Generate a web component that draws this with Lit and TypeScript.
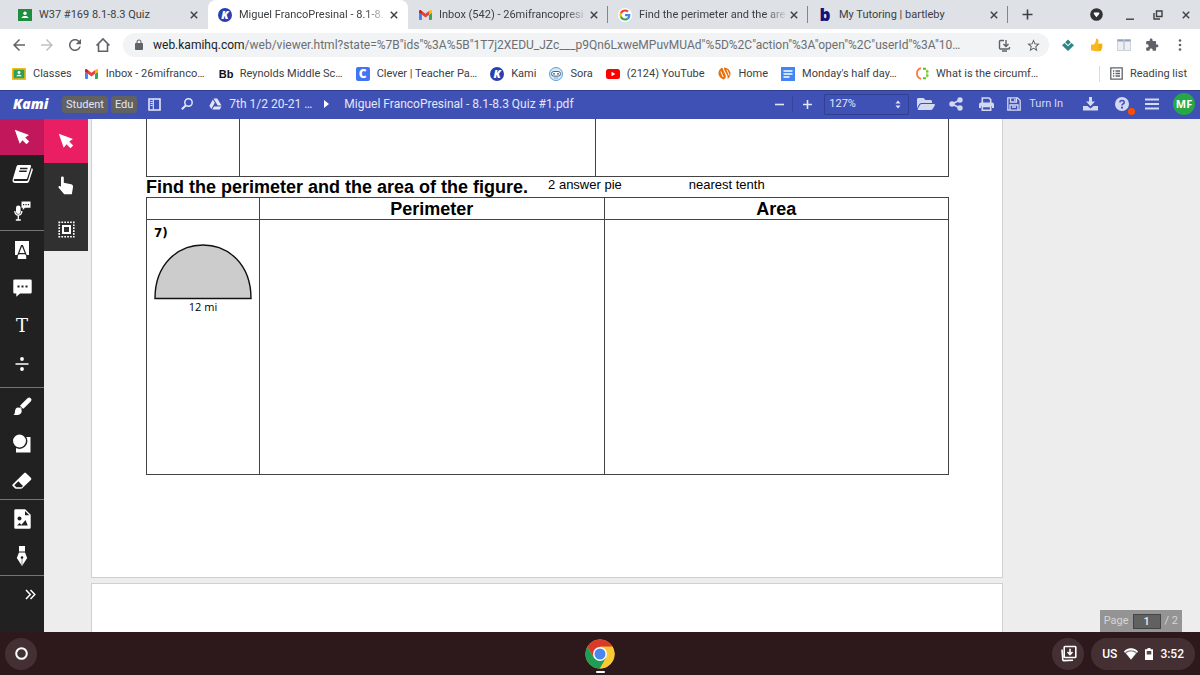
import { LitElement, html, svg, css, TemplateResult } from "lit";
import { customElement, property, state } from "lit/decorators.js";
import { classMap } from "lit/directives/class-map.js";

const draw = (w: number, h: number, box: string, body: TemplateResult) =>
  html`<svg width=${w} height=${h} viewBox=${box} aria-hidden="true">${body}</svg>`;

const path = (size: number, d: string) => draw(size, size, "0 0 24 24", svg`<path fill="currentColor" d=${d}></path>`);

const icons: Record<string, TemplateResult> = {
  back: path(18, "M20 11H7.83l5.59-5.59L12 4l-8 8 8 8 1.41-1.41L7.83 13H20v-2z"),
  forward: path(18, "M12 4l-1.41 1.41L16.17 11H4v2h12.17l-5.58 5.59L12 20l8-8z"),
  reload: path(18, "M17.65 6.35C16.2 4.9 14.21 4 12 4c-4.42 0-7.99 3.58-7.99 8s3.57 8 7.99 8c3.73 0 6.84-2.55 7.73-6h-2.08c-.82 2.33-3.04 4-5.65 4-3.31 0-6-2.69-6-6s2.69-6 6-6c1.66 0 3.14.69 4.22 1.78L13 11h7V4l-2.35 2.35z"),
  home: draw(16, 16, "0 0 16 16", svg`<path d="M1.5 8.5 8 2l6.500 6.500M3.500 7v7.200h9V7" fill="none" stroke="currentColor" stroke-width="1.600"></path>`),
  lock: path(12, "M18 8h-1V6c0-2.760-2.240-5-5-5S7 3.240 7 6v2H6c-1.100 0-2 .9-2 2v10c0 1.100.9 2 2 2h12c1.100 0 2-.9 2-2V10c0-1.100-.9-2-2-2zm-9-2c0-1.660 1.340-3 3-3s3 1.340 3 3v2H9V6z"),
  star: path(15, "M22 9.24l-7.19-.62L12 2 9.19 8.63 2 9.24l5.46 4.73L5.82 21 12 17.27 18.18 21l-1.63-7.03L22 9.24zM12 15.4l-3.76 2.27 1-4.28-3.32-2.88 4.38-.38L12 6.1l1.71 4.04 4.38.38-3.32 2.88 1 4.28L12 15.4z"),
  install: draw(13, 13, "0 0 13 13", svg`<path d="M6 1.500H2.500a1 1 0 0 0-1 1v6.500a1 1 0 0 0 1 1h8a1 1 0 0 0 1-1V8M4 12h5M8 1v6M5.500 5 8 7.500 10.500 5" fill="none" stroke="currentColor" stroke-width="1.400"></path>`),
  puzzle: path(14, "M20.5 11H19V7c0-1.1-.9-2-2-2h-4V3.5C13 2.12 11.88 1 10.5 1S8 2.12 8 3.5V5H4c-1.1 0-1.99.9-1.99 2v3.8H3.5c1.49 0 2.7 1.21 2.7 2.7s-1.21 2.700-2.700 2.700H2V20c0 1.1.9 2 2 2h3.800v-1.500c0-1.490 1.210-2.700 2.700-2.700 1.490 0 2.700 1.210 2.700 2.700V22H17c1.1 0 2-.9 2-2v-4h1.500c1.380 0 2.500-1.120 2.500-2.500S21.880 11 20.500 11z"),
  more: draw(14, 14, "0 0 14 14", svg`<g fill="currentColor"><circle cx="7" cy="2.500" r="1.300"></circle><circle cx="7" cy="7" r="1.300"></circle><circle cx="7" cy="11.500" r="1.300"></circle></g>`),
  diamond: draw(12, 12, "0 0 12 12", svg`<path fill="#2f8583" d="M6 .5 8.800 3.300 6 6 3.200 3.300zM2.500 3.900 6 7.300l3.500-3.400L12 6.300 6 12 0 6.300z"></path>`),
  thumb: draw(13, 14, "0 0 13 14", svg`<path fill="#f9b81f" d="M1 6.500h3C5.500 5 6 3 6 .8c1.800-.6 2.900.7 2.500 2.600L8 5.500h3.200c1.500 0 1.700 1.600.9 2 .8.700.6 1.800-.2 2.100.5.800.2 1.600-.6 1.900.2 1-.4 1.700-1.400 1.700H6C4 13.200 3 12.500 1 12.500z"></path><path d="M8.500 7.500h3M8.500 9.600h3M8.300 11.500h2.600" stroke="#e08a10" stroke-width=".6"></path>`),
  columns: draw(14, 12, "0 0 14 12", svg`<g fill="#eceff3" stroke="#b9c0c8" stroke-width=".7"><path d="M.5.5h6v11h-6zM7.500.5h6v11h-6z"></path></g><path fill="#8fa3bd" d="M.5.5h6v2h-6zM7.500.5h6v2h-6z"></path>`),
  close: draw(8, 8, "0 0 8 8", svg`<path d="m.8.8 6.400 6.400M7.200.8.8 7.200" stroke="currentColor" stroke-width="1.400"></path>`),
  plus: draw(11, 11, "0 0 11 11", svg`<path d="M5.500.5v10M.5 5.500h10" stroke="currentColor" stroke-width="1.600"></path>`),
  minus: draw(9, 9, "0 0 9 9", svg`<path d="M0 4.500h9" stroke="currentColor" stroke-width="1.600"></path>`),
  zoomIn: draw(9, 9, "0 0 9 9", svg`<path d="M0 4.500h9M4.500 0v9" stroke="currentColor" stroke-width="1.600"></path>`),
  account: draw(13, 13, "0 0 13 13", svg`<circle cx="6.500" cy="6.500" r="6.300" fill="#303236"></circle><path d="M3.800 4.500h5.400v1.500L6.500 9.200 3.800 6z" fill="#fff"></path>`),
  minimize: draw(10, 12, "0 0 10 12", svg`<path d="M1 10.200h8" stroke="currentColor" stroke-width="1.400"></path>`),
  restore: draw(10, 10, "0 0 10 10", svg`<path d="M3.500 1h5.500v5.500H3.500zM1 3v6h6" fill="none" stroke="currentColor" stroke-width="1.400"></path>`),
  classroomGreen: draw(14, 12, "0 0 14 12", svg`<path fill="#1e8e3e" d="M0 0h14v12H0z"></path><circle cx="7" cy="4.300" r="1.700" fill="#fff"></circle><path d="M3.500 9c.5-2.600 6.500-2.600 7 0z" fill="#fff"></path>`),
  classroom: draw(14, 12, "0 0 14 12", svg`<path fill="#f6b91a" d="M0 0h14v12H0z"></path><path fill="#2e9e58" d="M1.700 1.700h10.600v8.600H1.700z"></path><circle cx="7" cy="4.500" r="1.400" fill="#fff"></circle><path d="M4.200 8.300c.4-2.200 5.200-2.200 5.600 0z" fill="#fff"></path>`),
  gmail: draw(13, 10, "52 42 88 66", svg`<path fill="#4285f4" d="M58 108h14V74L52 59v43c0 3.320 2.690 6 6 6"></path><path fill="#34a853" d="M120 108h14c3.320 0 6-2.690 6-6V59l-20 15"></path><path fill="#fbbc04" d="M120 48v26l20-15v-8c0-7.420-8.470-11.650-14.400-7.200"></path><path fill="#ea4335" d="M72 74V48l24 18 24-18v26L96 92"></path><path fill="#c5221f" d="M52 51v8l20 15V48l-5.600-4.200c-5.940-4.450-14.400-.22-14.400 7.200"></path>`),
  google: draw(14, 14, "-6 -6 60 60", svg`<circle cx="24" cy="24" r="30" fill="#fff"></circle><path fill="#EA4335" d="M24 9.500c3.540 0 6.710 1.220 9.210 3.600l6.850-6.850C35.900 2.380 30.470 0 24 0 14.620 0 6.510 5.380 2.560 13.220l7.980 6.190C12.430 13.720 17.740 9.500 24 9.500z"></path><path fill="#4285F4" d="M46.980 24.550c0-1.570-.15-3.090-.38-4.550H24v9.020h12.940c-.58 2.960-2.260 5.480-4.780 7.180l7.730 6c4.510-4.180 7.090-10.360 7.090-17.650z"></path><path fill="#FBBC05" d="M10.530 28.590c-.48-1.450-.76-2.990-.76-4.590s.27-3.140.76-4.590l-7.980-6.190C.92 16.460 0 20.120 0 24c0 3.880.92 7.540 2.560 10.780l7.970-6.190z"></path><path fill="#34A853" d="M24 48c6.480 0 11.930-2.130 15.890-5.810l-7.730-6c-2.150 1.450-4.920 2.300-8.160 2.300-6.260 0-11.570-4.220-13.470-9.910l-7.980 6.190C6.510 42.620 14.620 48 24 48z"></path>`),
  sora: draw(14, 14, "0 0 14 14", svg`<circle cx="7" cy="7" r="6.500" fill="#d5eafa" stroke="#5f9dcc"></circle><rect x="2.500" y="4.500" width="9" height="4.600" rx="2.300" fill="#fff" stroke="#35557e" stroke-width=".9"></rect><circle cx="5" cy="6.800" r=".9" fill="#35557e"></circle><circle cx="9" cy="6.800" r=".9" fill="#35557e"></circle><path d="M5 11h4" stroke="#5f9dcc" stroke-width=".8"></path>`),
  youtube: draw(14, 10, "0 0 14 10", svg`<rect width="14" height="10" rx="2.500" fill="#f00"></rect><path d="M5.500 2.800v4.400L9.300 5z" fill="#fff"></path>`),
  flame: draw(13, 13, "0 0 13 13", svg`<g fill="#e8710a"><path d="M4.200.6 7.600 8.200c.8 1.900-.3 3.600-2 4.300C3 11.500.5 9.500.5 6.300.5 3.500 2 1.500 4.200.6z"></path><path d="M6.300.5c3.700.4 6.200 2.900 6.200 6.200 0 2.500-1.300 4.500-3.400 5.600.8-1.200.8-2.400.2-3.800L6.500 3.300C6 2.200 5.900 1.300 6.300.5z"></path></g><path d="M2.800 4.500 5.200 10M9 2.800l2.200 5.700" stroke="#fff" stroke-width="1"></path>`),
  docs: draw(14, 14, "0 0 14 14", svg`<path fill="#4285f4" d="M0 0h14v14H0z"></path><path d="M2.500 4h9M2.500 7h9M2.500 10h6" stroke="#fff" stroke-width="1.400"></path>`),
  brainly: draw(13, 13, "0 0 13 13", svg`<path d="M5 1.200A5.500 5.500 0 0 0 5 11.800" fill="none" stroke="#ff7847" stroke-width="1.800"></path><path d="M7 1.800h3M10 4.500h2.500M10 8.500h2.500M7 11.300h3" stroke="#5fbf1f" stroke-width="2"></path><path d="M11 2.500v8" stroke="#93d942" stroke-width="1.400" stroke-dasharray="2 1"></path>`),
  reading: draw(13, 13, "0 0 13 13", svg`<path d="M.8.8h11.400v11.400H.8zM3 4h1.300M5.500 4H10M3 6.500h1.300M5.500 6.500H10M3 9h1.300M5.500 9H10" fill="none" stroke="#5f6368" stroke-width="1.300"></path>`),
  panel: draw(13, 13, "0 0 13 13", svg`<path d="M1 1h11v11H1z" fill="none" stroke="currentColor" stroke-width="1.600"></path><path d="M5.300 1v11M2.500 3.500h2M2.500 5.500h2M2.500 7.500h2" stroke="currentColor" stroke-width="1.100"></path>`),
  search: draw(12, 12, "0 0 12 12", svg`<circle cx="7.500" cy="4.500" r="3.700" fill="none" stroke="currentColor" stroke-width="1.500"></circle><path d="M5 7.200.8 11.300" stroke="currentColor" stroke-width="2"></path>`),
  drive: draw(13, 12, "0 0 13 12", svg`<path fill="currentColor" d="M4.500.5h3.800l4.200 7H8.700zM3.900 1.500 5.800 4.800 2.300 11 .4 7.700zM5 8.400h7.600l-1.900 3.100H3.200z"></path>`),
  folder: draw(18, 16, "0 0 576 512", svg`<path fill="currentColor" d="M572.694 292.093L500.27 416.248A63.997 63.997 0 0 1 444.989 448H45.025c-18.523 0-30.064-20.093-20.731-36.093l72.424-124.155A64 64 0 0 1 152 256h399.964c18.523 0 30.064 20.093 20.73 36.093zM152 224h328v-48c0-26.510-21.490-48-48-48H272l-64-64H48C21.490 64 0 85.490 0 112v278.046l69.077-118.418C86.214 242.250 117.989 224 152 224z"></path>`),
  share: draw(14, 14, "0 0 14 14", svg`<g fill="currentColor"><circle cx="3" cy="7" r="2.700"></circle><circle cx="11" cy="3" r="2.700"></circle><circle cx="11" cy="11" r="2.700"></circle></g><path d="M11 3 3 7l8 4" fill="none" stroke="currentColor" stroke-width="1.700"></path>`),
  print: draw(15, 14, "0 0 15 14", svg`<path d="M3.300 6V1h6.700l1.700 1.700V6" fill="none" stroke="currentColor" stroke-width="1.600"></path><path fill="currentColor" d="M2 5.500h11a2 2 0 0 1 2 2V11h-2V9H2v2H0V7.500a2 2 0 0 1 2-2z"></path><path d="M3.300 9.500h8.400v3.700H3.300z" fill="none" stroke="currentColor" stroke-width="1.600"></path>`),
  save: draw(14, 14, "0 0 14 14", svg`<path d="M.8.8h9.700l2.700 2.700v9.700H.8zM3.500 1v4h6V1M3 13V8h8v5M7.800 2v2M5 10h4" fill="none" stroke="currentColor" stroke-width="1.300"></path>`),
  download: draw(15, 14, "0 0 15 14", svg`<path fill="currentColor" d="M6 0h3v4.500h3L7.500 9.300 3 4.500h3zM0 9h4.500l3 2.500 3-2.500H15v4.500H0z"></path>`),
  help: draw(14, 14, "0 0 14 14", svg`<circle cx="7" cy="7" r="7" fill="currentColor"></circle><path d="M4.800 5.400c.2-2.700 4.500-2.500 4.400 0C9.200 7 7 6.800 7 8.600" fill="none" stroke="#3f51b5" stroke-width="1.600"></path><circle cx="7" cy="10.700" r="1.100" fill="#3f51b5"></circle>`),
  menu: draw(14, 12, "0 0 14 12", svg`<path d="M0 1.500h14M0 6h14M0 10.500h14" stroke="currentColor" stroke-width="1.800"></path>`),
  pointer: draw(16, 16, "0 0 16 16", svg`<path fill="currentColor" d="M.8.8 15 6l-3.800 2.600 4 3.900-2.700 2.700-4-4-2.800 3.500z"></path>`),
  book: draw(21, 20, "0 0 21 20", svg`<path fill="currentColor" d="M6.500 1h11.300c1 0 1.500.7 1.200 1.600l-3.700 11.300c-.3.800-.9 1.200-1.700 1.200H3c-1 0-1.500.6-1.200 1.300.2.500.7.700 1.300.7h11.200c.8 0 1.400-.5 1.700-1.200l3.800-11.800c.9.500 1.200 1.200.9 2.100l-3.600 11c-.4 1.200-1.300 1.800-2.500 1.800H3.300C1.500 19 .2 17.700.5 15.900L4.500 2.600C4.800 1.600 5.500 1 6.500 1z"></path><path d="M8 4.500h7.500M7.200 7.300h7.500" stroke="#212121" stroke-width="1.400"></path>`),
  speech: draw(17, 20, "0 0 17 20", svg`<path fill="currentColor" d="M7.500.5h9v6.300H11L8.800 9V6.800H7.500z"></path><rect x="2" y="4.500" width="4.600" height="8.500" rx="2.300" fill="currentColor"></rect><path d="M.8 10c.3 5.500 6.800 5.500 7.100 0M4.300 14v4.800M1.800 19h5" fill="none" stroke="currentColor" stroke-width="1.300"></path><path d="M9 3.700h1.200M11.400 3.700h1.200M13.800 3.700H15" stroke="#212121" stroke-width="1.200"></path>`),
  markup: draw(16, 18, "0 0 16 18", svg`<path fill="currentColor" d="M1 0h14v14h-2.300L8.900 4H7.100L3.300 14H1z"></path><path fill="currentColor" d="M8 5.200 10.700 12H5.300zM5 13.300h6l1.200 1.500V18H3.800v-3.200z"></path>`),
  comment: draw(19, 18, "0 0 19 18", svg`<path fill="currentColor" d="M1.500.5h16a1.200 1.200 0 0 1 1.200 1.200v11.600a1.200 1.200 0 0 1-1.200 1.200H7L3.300 17.700v-3.200H1.500a1.200 1.200 0 0 1-1.200-1.200V1.700A1.200 1.200 0 0 1 1.500.5z"></path><path d="M4.500 7.500h2M8.500 7.500h2M12.500 7.500h2" stroke="#212121" stroke-width="1.800"></path>`),
  divide: draw(14, 14, "0 0 14 14", svg`<path d="M.5 7h13" stroke="currentColor" stroke-width="1.500"></path><circle cx="7" cy="2" r="1.900" fill="currentColor"></circle><circle cx="7" cy="12" r="1.900" fill="currentColor"></circle>`),
  brush: draw(19, 19, "0 0 19 19", svg`<path d="m9.300 9.700 6.800-6.900" stroke="currentColor" stroke-width="4.500" stroke-linecap="round"></path><path fill="currentColor" d="M5 10.500c2.500 0 4 1.700 3.700 3.900-.4 3.200-4.500 4.300-8.200 3.400 1.500-.9 1.300-2 1.500-3.700.2-2 1.300-3.600 3-3.600z"></path><path d="M6.500 8.800l4 4" stroke="#212121" stroke-width="1"></path>`),
  shapes: draw(20, 19, "0 0 20 19", svg`<path d="M4 3h14.500v15.500H4z" fill="currentColor"></path><circle cx="7.500" cy="7" r="7.200" fill="currentColor" stroke="#212121" stroke-width="1.500"></circle>`),
  eraser: draw(20, 18, "0 0 20 18", svg`<path fill="currentColor" d="M12 1.300c.7-.6 1.500-.6 2.200 0l4.600 4.500c.7.700.7 1.500 0 2.200l-8.600 8.300c-.3.300-.7.500-1.200.5H3.500L.8 14.200c-.6-.6-.6-1.400 0-2z"></path><path fill="#212121" d="M6.300 9.200 11 14l-1.300 1.300H4.300l-2-2z"></path>`),
  picture: draw(17, 20, "0 0 17 20", svg`<path fill="currentColor" d="M1.500.3h9.700l5.500 5.500v12.700a1.200 1.200 0 0 1-1.200 1.200h-14A1.200 1.200 0 0 1 .3 18.500v-17A1.200 1.200 0 0 1 1.500.3z"></path><circle cx="5.500" cy="9.500" r="2" fill="#212121"></circle><path fill="#212121" d="M3 16.500 5.500 14l2 1.800 4-4.800 2.300 5.500zM11 2v4.300h4.300z"></path>`),
  pen: draw(12, 20, "0 0 12 20", svg`<path fill="currentColor" d="M3 0h6v5.500H3zM3 6.500h6l2.200 5.500L6 20 .8 12z"></path><circle cx="6" cy="11.500" r="1.300" fill="#212121"></circle><path d="M6 11.500V19" stroke="#212121" stroke-width=".5"></path>`),
  expand: draw(11, 11, "0 0 11 11", svg`<path d="m1 1 4.300 4.500L1 10M5.500 1l4.300 4.500L5.500 10" fill="none" stroke="currentColor" stroke-width="1.500"></path>`),
  hand: draw(16, 19, "0 0 16 19", svg`<path fill="currentColor" d="M3 1.800C3 .2 5.800.2 5.800 1.800v5L13 8.300c1.500.3 2.300 1.300 2 2.900l-1.200 7H6.200L.7 11.700c-.8-1 .6-2.400 1.700-1.500l.6.500z"></path>`),
  marquee: draw(17, 17, "0 0 17 17", svg`<path d="M.5 1.200h16M.5 15.800h16M1.200.5v16M15.800.5v16" stroke="currentColor" stroke-width="1.600" stroke-dasharray="1.700 1.200"></path><path d="M5 5h7v7H5z" fill="none" stroke="currentColor" stroke-width="2"></path>`),
  launcher: draw(13, 13, "0 0 13 13", svg`<circle cx="6.500" cy="6.500" r="5.300" fill="none" stroke="#fff" stroke-width="2"></circle>`),
  chrome: draw(30, 30, "0 0 30 30", svg`<circle cx="15" cy="15" r="14.500" fill="#fbc934"></circle><path fill="#d93a2b" d="M2.440 7.750A14.500 14.500 0 0 1 27.560 7.750H15L8.700 18.600z"></path><path fill="#1f9d55" d="M2.440 7.750A14.500 14.500 0 0 0 15 29.500L21.300 18.600 8.700 18.600z"></path><path fill="#fbc934" d="M27.560 7.750A14.500 14.500 0 0 1 15 29.500L21.300 18.600 21 10 15 7.750z"></path><circle cx="15" cy="15" r="7" fill="#fff"></circle><circle cx="15" cy="15" r="5.500" fill="#4a86ee"></circle>`),
  tote: draw(17, 17, "0 0 17 17", svg`<path d="M5 1.500h10a.8.8 0 0 1 .8.800v9.400a.8.8 0 0 1-.8.800H5a.8.8 0 0 1-.8-.8V2.300A.8.8 0 0 1 5 1.500zM2 4.500l.8 10.300c0 .5.400.8.900.8l9.300-.3" fill="none" stroke="#fff" stroke-width="1.600"></path><path d="M10 3.800v5.500M7.500 7 10 9.500 12.500 7" fill="none" stroke="#fff" stroke-width="1.600"></path>`),
  wifi: draw(14, 12, "0 0 14 12", svg`<path fill="#fff" fill-opacity=".35" d="M0 3.500C4-.8 10-.8 14 3.500L7 12z"></path><path fill="#fff" d="M0 3.500C4-.8 10-.8 14 3.500l-1 1.200C9.500 1.500 4.500 1.500 1 4.700zM2 5.300c3-2.500 7-2.500 10 0L7 11.500z"></path>`),
  battery: draw(8, 12, "0 0 8 12", svg`<path fill="#fff" d="M2.500 0h3v1.300H8V12H0V1.300h2.500z"></path><path fill="#57464a" d="M1.700 3h4.600v3.500H1.700z"></path>`),
};

interface Mark { icon?: string; glyph?: string; kind?: string; label: string; long?: boolean; active?: boolean }

const mark = (m: Mark) =>
  m.glyph ? html`<span class="glyph ${m.kind}">${m.glyph}</span>` : html`<span class="glyph">${icons[m.icon!]}</span>`;

const glyphs = css`
  .glyph { flex: none; display: grid; place-items: center; width: 14px; height: 14px; line-height: 14px; }
  .kami { border-radius: 50%; background: #2c3fb0; color: #fff; font: italic 800 11px/14px "Open Sans", sans-serif; }
  .bb { font: 700 11px/14px "Liberation Sans", sans-serif; color: #111; }
  .clever { border-radius: 2px; background: #4274f6; color: #fff; font: 800 12px/14px "Open Sans", sans-serif; }
  .bartleby { color: #12127a; font: 800 17px/14px "Open Sans", sans-serif; }
`;

const base = css`
  :host { display: block; font-family: Roboto, sans-serif; }
  * { box-sizing: border-box; }
  svg { display: block; flex: none; }
  button { border: 0; padding: 0; background: none; color: inherit; font: inherit; display: grid; place-items: center; cursor: pointer; }
  a { color: inherit; text-decoration: none; }
`;

@customElement("browser-chrome")
export class BrowserChrome extends LitElement {
  static styles = [base, glyphs, css`
    :host { color: #3c4043; background: #fff; font-size: 11px; line-height: 16px; }
    .tabs { display: flex; height: 29px; background: #dee1e6; padding-left: 8px; }
    .tab { flex: 0 1 200px; min-width: 0; display: flex; align-items: center; padding: 0 10px; position: relative; }
    .tab.active { background: #fff; border-radius: 8px 8px 0 0; }
    .tab.split::after { content: ""; position: absolute; right: 0; top: 6px; width: 1px; height: 17px; background: #80868b; }
    .title { flex: 1; min-width: 0; margin: 0 2px 0 7px; overflow: hidden; white-space: nowrap; -webkit-mask-image: linear-gradient(90deg, #000 85%, transparent); }
    .title.short { -webkit-mask-image: none; }
    .tab button { width: 8px; height: 16px; }
    .new { width: 38px; }
    .window { margin-left: auto; display: flex; align-items: center; padding-right: 4px; }
    .window button { width: 20px; height: 28px; margin-right: 8px; }
    .window .account { margin-right: 14px; }
    .window button:last-child { margin-right: 0; }
    .bar { display: flex; align-items: center; gap: 8px; height: 32px; padding: 0 10px 0 9px; color: #5f6368; }
    .bar button { width: 20px; height: 24px; }
    .bar .dim { color: #bdc1c6; }
    .address { flex: 1; min-width: 0; display: flex; align-items: center; height: 24px; margin: 0 1px 0 2px; padding: 0 6px 0 10px; border-radius: 12px; background: #f1f3f4; font-size: 12px; }
    .address label { margin-left: 8px; color: #202124; }
    .address input { flex: 1; min-width: 0; border: 0; padding: 0; background: none; font: inherit; color: #6b6f73; outline: 0; }
    .address button { margin-left: 9px; }
    .marks { display: flex; align-items: center; gap: 13px; height: 29px; padding: 0 13px 4px 12px; white-space: nowrap; }
    .marks a { display: flex; align-items: center; gap: 7px; }
    .long { min-width: 100px; }
    .reading { margin-left: auto; display: flex; gap: 7px; padding-left: 10px; border-left: 1px solid #dadce0; }
  `];

  private tabs: Mark[] = [
    { icon: "classroomGreen", label: "W37 #169 8.1-8.3 Quiz" },
    { glyph: "K", kind: "kami", label: "Miguel FrancoPresinal - 8.1-8.", long: true, active: true },
    { icon: "gmail", label: "Inbox (542) - 26mifrancopresi", long: true },
    { icon: "google", label: "Find the perimeter and the are", long: true },
    { glyph: "b", kind: "bartleby", label: "My Tutoring | bartleby" },
  ];

  private marks: Mark[] = [
    { icon: "classroom", label: "Classes" },
    { icon: "gmail", label: "Inbox - 26mifranco…", long: true },
    { glyph: "Bb", kind: "bb", label: "Reynolds Middle Sc…", long: true },
    { glyph: "C", kind: "clever", label: "Clever | Teacher Pa…", long: true },
    { glyph: "K", kind: "kami", label: "Kami" },
    { icon: "sora", label: "Sora" },
    { icon: "youtube", label: "(2124) YouTube" },
    { icon: "flame", label: "Home" },
    { icon: "docs", label: "Monday's half day…", long: true },
    { icon: "brainly", label: "What is the circumf…", long: true },
  ];

  render() {
    return html`
      <div class="tabs">
        ${this.tabs.map((t, i) => html`
          <div class=${classMap({ tab: true, active: !!t.active, split: i > 1 })}>
            ${mark(t)}<span class=${classMap({ title: true, short: !t.long })}>${t.label}</span>
            <button aria-label="Close tab">${icons.close}</button>
          </div>`)}
        <button class="new" aria-label="New tab">${icons.plus}</button>
        <div class="window">
          <button class="account" aria-label="Account">${icons.account}</button>
          <button aria-label="Minimize">${icons.minimize}</button>
          <button aria-label="Restore">${icons.restore}</button>
          <button aria-label="Close">${icons.close}</button>
        </div>
      </div>
      <div class="bar">
        <button aria-label="Back">${icons.back}</button>
        <button class="dim" aria-label="Forward">${icons.forward}</button>
        <button aria-label="Reload">${icons.reload}</button>
        <button aria-label="Home">${icons.home}</button>
        <div class="address">
          ${icons.lock}
          <label for="url">web.kamihq.com</label>
          <input id="url" .value=${'/web/viewer.html?state=%7B"ids"%3A%5B"1T7j2XEDU_JZc___p9Qn6LxweMPuvMUAd"%5D%2C"action"%3A"open"%2C"userId"%3A"10…'}>
          <button aria-label="Install">${icons.install}</button>
          <button aria-label="Bookmark">${icons.star}</button>
        </div>
        <button aria-label="Extension">${icons.diamond}</button>
        <button aria-label="Like">${icons.thumb}</button>
        <button aria-label="Side by side">${icons.columns}</button>
        <button aria-label="Extensions">${icons.puzzle}</button>
        <button aria-label="More">${icons.more}</button>
      </div>
      <nav class="marks">
        ${this.marks.map((m) => html`<a href="#">${mark(m)}<span class=${classMap({ long: !!m.long })}>${m.label}</span></a>`)}
        <button class="reading">${icons.reading}<span>Reading list</span></button>
      </nav>`;
  }
}

@customElement("kami-header")
export class KamiHeader extends LitElement {
  static styles = [base, css`
    :host { background: #3f51b5; border-top: 1px solid #303f8f; color: #e3e6f8; font-size: 12px; line-height: 16px; }
    header { display: flex; align-items: center; height: 28px; padding: 0 5px 2px 13px; white-space: nowrap; }
    .brand { width: 49px; color: #fff; font: italic 800 14px/20px "Open Sans", sans-serif; }
    .chip { margin-right: 3px; padding: 0 4px; border-radius: 3px; background: #616161; font-size: 11px; line-height: 17px; }
    .panel { margin: 0 20px 0 8px; }
    .search { margin-right: 16px; }
    .crumb { display: flex; align-items: center; gap: 7px; width: 115px; }
    .arrow { flex: none; width: 0; border: 4px solid transparent; border-left: 5px solid #fff; border-right: 0; margin-right: 15px; }
    .name { flex: 1; min-width: 0; overflow: hidden; text-overflow: ellipsis; }
    .out { padding-right: 8px; }
    .in { padding: 0 12px 0 10px; border-left: 1px solid #35459b; height: 16px; }
    select { appearance: none; width: 85px; height: 21px; padding: 0 4px; border: 1px solid #303f8f; border-radius: 1px; background: #3f51b5; color: inherit; font: 11px/16px Roboto, sans-serif; }
    .zoom { position: relative; margin-right: 8px; }
    .zoom svg { position: absolute; right: 8px; top: 6px; pointer-events: none; }
    .tools { display: flex; align-items: center; }
    .tools button { min-width: 18px; height: 26px; margin-right: 12px; color: #d4d9f2; }
    .tools .turn { display: flex; align-items: center; gap: 8px; margin-right: 18px; font-size: 11px; }
    .tools .get { margin-right: 14px; }
    .help { position: relative; }
    .help i { position: absolute; right: -4px; bottom: 2px; width: 7px; height: 7px; border-radius: 50%; background: #ff4d00; }
    .avatar { display: grid; place-items: center; width: 22px; height: 22px; border-radius: 50%; background: #28a745; color: #fff; font: 700 11px/22px "Open Sans", sans-serif; }
  `];

  render() {
    return html`<header>
      <span class="brand">Kami</span>
      <span class="chip">Student</span><span class="chip">Edu</span>
      <button class="panel" aria-label="Side panel">${icons.panel}</button>
      <button class="search" aria-label="Search">${icons.search}</button>
      <a class="crumb" href="#">${icons.drive}<span>7th 1/2 20-21 …</span></a>
      <span class="arrow"></span>
      <span class="name">Miguel FrancoPresinal - 8.1-8.3 Quiz #1.pdf</span>
      <button class="out" aria-label="Zoom out">${icons.minus}</button>
      <button class="in" aria-label="Zoom in">${icons.zoomIn}</button>
      <div class="zoom">
        <select aria-label="Zoom"><option>127%</option></select>
        ${draw(6, 9, "0 0 6 9", svg`<path fill="#e3e6f8" d="M.5 3.500 3 .5l2.500 3zM.5 5.500h5L3 8.500z"></path>`)}
      </div>
      <div class="tools">
        <button aria-label="Open">${icons.folder}</button>
        <button aria-label="Share">${icons.share}</button>
        <button aria-label="Print">${icons.print}</button>
        <button class="turn">${icons.save}<span>Turn In</span></button>
        <button class="get" aria-label="Download">${icons.download}</button>
        <button class="help" aria-label="Help">${icons.help}<i></i></button>
        <button aria-label="Menu">${icons.menu}</button>
        <span class="avatar">MF</span>
      </div>
    </header>`;
  }
}

@customElement("tool-rail")
export class ToolRail extends LitElement {
  @state() private tool = "pointer";

  static styles = [base, css`
    :host { display: flex; align-items: flex-start; color: #fff; }
    .rail { align-self: stretch; width: 44px; background: #212121; }
    .rail button { width: 44px; height: 37px; }
    .rail .current { height: 36px; background: #c2185b; }
    .group { display: grid; padding-bottom: 1px; border-bottom: 1px solid #757575; }
    .group.wide { gap: 1px; padding-bottom: 5px; }
    .group.tight { padding-bottom: 0; }
    .rail .more { padding-left: 16px; }
    .text { font: 18px/20px "DejaVu Serif", serif; }
    .sub { background: #303030; }
    .sub button { width: 44px; height: 44px; }
    .sub .on { background: #e91e63; }
  `];

  private button(name: string) {
    return html`<button aria-label=${name}>${icons[name]}</button>`;
  }

  render() {
    return html`
      <div class="rail">
        <button class="current" aria-label="Select">${icons.pointer}</button>
        <div class="group">${["book", "speech"].map(this.button)}</div>
        <div class="group wide">
          ${["markup", "comment"].map(this.button)}
          <button class="text">T</button>
          ${this.button("divide")}
        </div>
        <div class="group tight">${["brush", "shapes", "eraser"].map(this.button)}</div>
        <div class="group">${["picture", "pen"].map(this.button)}</div>
        <button class="more" aria-label="Expand">${icons.expand}</button>
      </div>
      <div class="sub">
        ${["pointer", "hand", "marquee"].map((name) => html`
          <button class=${classMap({ on: this.tool === name })} aria-label=${name} @click=${() => (this.tool = name)}>${icons[name]}</button>`)}
      </div>`;
  }
}

@customElement("quiz-page")
export class QuizPage extends LitElement {
  static styles = [base, css`
    :host { color: #000; font-family: "Liberation Sans", Arial, sans-serif; }
    .sheet { background: #fff; border: 1px solid #d0d0d0; padding: 0 53px 0 54px; }
    .first { border-top: 0; padding-bottom: 102px; margin-bottom: 5px; }
    .second { min-height: 200px; }
    table { width: 100%; border-collapse: collapse; table-layout: fixed; }
    td, th { border: 1px solid #444; padding: 0; }
    .tail { border-top: 0; }
    .tail td { height: 57px; border-top: 0; }
    .tail .num { width: 93px; }
    .tail .mid { width: 356px; }
    .prompt { display: flex; align-items: center; height: 20px; white-space: nowrap; }
    h1 { margin: 0; font-size: 18px; line-height: 20px; font-weight: 700; }
    .note { margin: 0 0 4px 20px; font-size: 13px; line-height: 16px; }
    .note + .note { margin: 0 0 4px 67px; }
    .answers th { height: 22px; padding-top: 1px; font-size: 18px; line-height: 20px; }
    .answers .num { width: 113px; }
    .answers td { height: 255px; vertical-align: top; padding: 3px 7px 0 7px; }
    .no { font: 700 12px/16px "DejaVu Sans", sans-serif; }
    figure { margin: 3px 0 0; }
    figure svg { width: 100%; height: 56px; }
    figcaption { text-align: center; font: 11px/14px "Open Sans", sans-serif; }
  `];

  render() {
    return html`
      <section class="sheet first">
        <table class="tail"><tr><td class="num"></td><td class="mid"></td><td></td></tr></table>
        <div class="prompt">
          <h1>Find the perimeter and the area of the figure.</h1>
          <span class="note">2 answer pie</span>
          <span class="note">nearest tenth</span>
        </div>
        <table class="answers">
          <tr><th class="num"></th><th>Perimeter</th><th>Area</th></tr>
          <tr>
            <td>
              <span class="no">7)</span>
              <figure>
                ${draw(98, 56, "0 0 98 56", svg`<path d="M1 54.500C1 20 24 1 49 1s48 19 48 53.500z" fill="#ccc" stroke="#111" stroke-width="1.400"></path>`)}
                <figcaption>12 mi</figcaption>
              </figure>
            </td>
            <td></td><td></td>
          </tr>
        </table>
      </section>
      <section class="sheet second"></section>`;
  }
}

@customElement("system-shelf")
export class SystemShelf extends LitElement {
  static styles = [base, css`
    :host { background: #2d191c; color: #fff; font-size: 12px; line-height: 16px; font-weight: 500; }
    footer { display: grid; grid-template-columns: 1fr auto 1fr; align-items: center; height: 43px; padding: 0 5px; }
    .launcher, .tote { width: 32px; height: 32px; border-radius: 50%; background: #443033; }
    .app { justify-items: center; align-content: end; gap: 2px; height: 43px; padding-bottom: 2px; }
    .app i { width: 9px; height: 2px; border-radius: 1px; background: #fff; }
    .right { display: flex; justify-content: flex-end; gap: 7px; }
    .status { display: flex; align-items: center; gap: 7px; height: 32px; padding: 0 11px; border-radius: 16px; background: #443033; }
  `];

  render() {
    return html`<footer>
      <button class="launcher" aria-label="Launcher">${icons.launcher}</button>
      <button class="app" aria-label="Chrome">${icons.chrome}<i></i></button>
      <div class="right">
        <button class="tote" aria-label="Downloads">${icons.tote}</button>
        <button class="status"><span>US</span>${icons.wifi}${icons.battery}<span>3:52</span></button>
      </div>
    </footer>`;
  }
}

@customElement("app-root")
export class AppRoot extends LitElement {
  @property({ type: Number }) page = 1;

  static styles = [base, css`
    :host { display: grid; grid-template-rows: auto auto minmax(0, 1fr) auto; height: 100vh; overflow: hidden; }
    main { position: relative; display: flex; min-height: 0; overflow: hidden; background: #ededed; }
    tool-rail { display: flex; flex: none; }
    .canvas { flex: 1; min-width: 0; padding: 0 197px 0 3px; overflow: hidden; }
    .pager { position: absolute; right: 18px; bottom: 0; display: flex; align-items: center; height: 22px; padding: 0 4px; background: #949494; color: #d6d6d6; font-size: 11px; line-height: 16px; }
    .pager input { width: 28px; height: 15px; margin: 0 4px; padding: 0; border: 1px solid #444; background: #616161; color: #eee; font: 500 11px/13px Roboto, sans-serif; text-align: center; }
  `];

  render() {
    return html`
      <browser-chrome></browser-chrome>
      <kami-header></kami-header>
      <main>
        <tool-rail></tool-rail>
        <div class="canvas"><quiz-page></quiz-page></div>
        <div class="pager">
          <label for="page">Page</label>
          <input id="page" .value=${String(this.page)}>
          <span>/ 2</span>
        </div>
      </main>
      <system-shelf></system-shelf>`;
  }
}
